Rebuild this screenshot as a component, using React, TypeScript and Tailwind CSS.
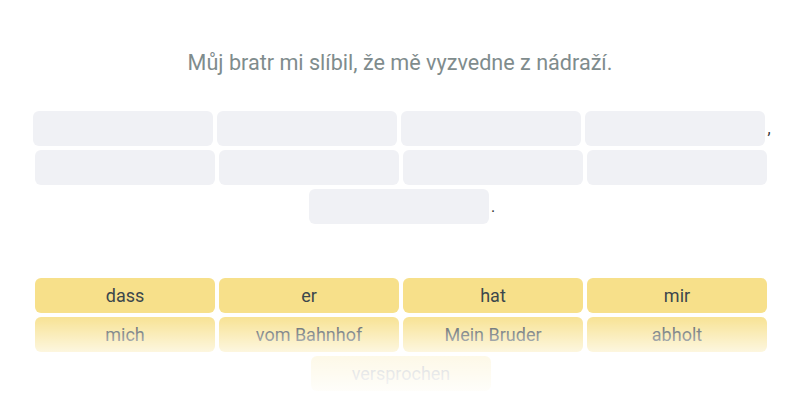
const slots: (string | null)[] = [null, null, null, null, ',', null, null, null, null, null, '.'];
const bank = ['dass', 'er', 'hat', 'mir', 'mich', 'vom Bahnhof', 'Mein Bruder', 'abholt', 'versprochen'];

export default function App() {
  return (
    <div className="relative h-[400px] w-[800px] overflow-hidden bg-white font-['Roboto',sans-serif]">
      {/* Prompt */}
      <div className="pt-[48px] text-center text-[21.6px] leading-[30px] text-[#7f8c8d]">
        Můj bratr mi slíbil, že mě vyzvedne z nádraží.
      </div>

      {/* Answer slots */}
      <div className="mt-[31px] flex flex-wrap items-center justify-center pl-[30px] pr-[28px]">
        {slots.map((s, i) =>
          s ? (
            <span key={i} className="text-[16px] leading-[24px] text-[#333]">
              {s}
            </span>
          ) : (
            <div key={i} className="m-[2px] h-[35px] w-[180px] rounded-[6px] bg-[#f0f1f5]" />
          )
        )}
      </div>

      {/* Word bank */}
      <div className="mt-[50px] flex flex-wrap justify-center pl-[30px] pr-[28px]">
        {bank.map(w => (
          <div
            key={w}
            className="m-[2px] flex h-[35px] w-[180px] items-center justify-center rounded-[6px] bg-[#f7e08a] text-[18px] text-[#3c474c]"
          >
            {w}
          </div>
        ))}
      </div>

      {/* Fade */}
      <div className="pointer-events-none absolute inset-x-0 top-[312px] h-[88px] bg-gradient-to-b from-white/0 via-white/80 to-white" />
    </div>
  );
}
